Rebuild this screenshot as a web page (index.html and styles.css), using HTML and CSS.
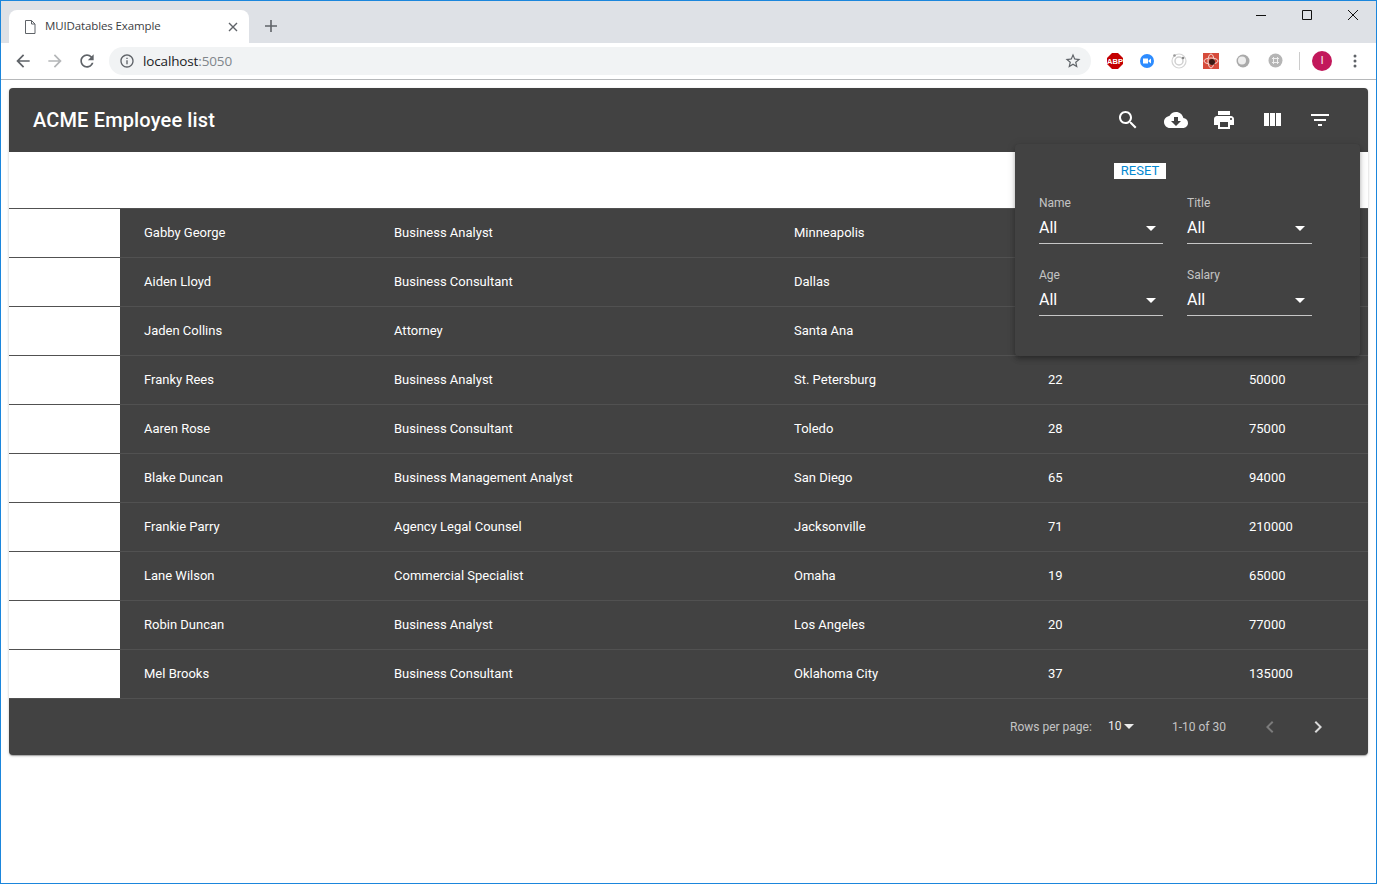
FILE: index.html
```html
<!DOCTYPE html>
<html lang="en">
<head>
<meta charset="utf-8">
<title>MUIDatables Example</title>
<link rel="stylesheet" href="styles.css">
</head>
<body>
<div class="window">
  <div class="tabstrip">
    <div class="tab">
      <svg class="tab-doc" width="12" height="14" viewBox="0 0 12 14"><path d="M1.5.5h6l3.5 3.5v9.5h-9.500zM7.500.5v3.500H11" fill="none" stroke="#5f6368"/></svg>
      <span class="tab-title">MUIDatables Example</span>
      <svg class="tab-close" width="10" height="10" viewBox="0 0 10 10"><path d="M1 1l8 8M9 1l-8 8" stroke="#5f6368" stroke-width="1.400"/></svg>
    </div>
    <svg class="new-tab" width="12" height="12" viewBox="0 0 12 12"><path d="M6 0v12M0 6h12" stroke="#5f6368" stroke-width="1.600"/></svg>
    <div class="win-controls">
      <svg width="10" height="10" viewBox="0 0 10 10"><path d="M0 5.500h10" stroke="#111"/></svg>
      <svg width="10" height="10" viewBox="0 0 10 10"><path d="M.5.500h9v9h-9z" fill="none" stroke="#111"/></svg>
      <svg width="10" height="10" viewBox="0 0 10 10"><path d="M0 0l10 10M10 0L0 10" stroke="#111"/></svg>
    </div>
  </div>
  <div class="browserbar">
    <div class="nav">
      <svg width="20" height="20" viewBox="0 0 24 24" fill="#5f6368"><path d="M20 11H7.830l5.590-5.590L12 4l-8 8 8 8 1.410-1.410L7.830 13H20v-2z"/></svg>
      <svg width="20" height="20" viewBox="0 0 24 24" fill="#b4b6b8"><path d="M4 11h12.170l-5.590-5.590L12 4l8 8-8 8-1.410-1.410L16.170 13H4v-2z"/></svg>
      <svg width="20" height="20" viewBox="0 0 24 24" fill="#5f6368"><path d="M17.650 6.350C16.200 4.900 14.210 4 12 4c-4.420 0-7.990 3.580-7.990 8s3.570 8 7.990 8c3.730 0 6.840-2.550 7.730-6h-2.080c-.82 2.330-3.040 4-5.650 4-3.310 0-6-2.690-6-6s2.690-6 6-6c1.660 0 3.140.69 4.220 1.780L13 11h7V4l-2.350 2.350z"/></svg>
    </div>
    <div class="omnibox">
      <svg width="16" height="16" viewBox="0 0 24 24" fill="#5f6368"><path d="M11 7h2v2h-2zm0 4h2v6h-2zm1-9C6.480 2 2 6.480 2 12s4.480 10 10 10 10-4.480 10-10S17.520 2 12 2zm0 18c-4.410 0-8-3.590-8-8s3.590-8 8-8 8 3.590 8 8-3.590 8-8 8z"/></svg>
      <span class="url">localhost<span class="url-port">:5050</span></span>
      <svg class="star" width="18" height="18" viewBox="0 0 24 24" fill="#5f6368"><path d="M22 9.240l-7.190-.62L12 2 9.190 8.630 2 9.240l5.460 4.730L5.820 21 12 17.270 18.180 21l-1.630-7.030L22 9.240zM12 15.400l-3.760 2.270 1-4.280-3.320-2.880 4.380-.38L12 6.100l1.710 4.040 4.380.38-3.320 2.880 1 4.280L12 15.400z"/></svg>
    </div>
    <div class="extensions">
      <svg width="16" height="16" viewBox="0 0 16 16"><path d="M5 0h6l5 5v6l-5 5H5l-5-5V5z" fill="#c40000"/><text x="8" y="10.800" class="abp">ABP</text></svg>
      <svg width="14" height="14" viewBox="0 0 14 14"><circle cx="7" cy="7" r="7" fill="#2d8cff"/><path d="M3 4.500h5v5H3zM8.500 6.500l2.500-2v5l-2.500-2z" fill="#fff"/></svg>
      <svg width="16" height="16" viewBox="0 0 16 16"><circle cx="8" cy="8" r="7" fill="none" stroke="#d4d4d4" stroke-width="1.200"/><circle cx="8" cy="8" r="4" fill="none" stroke="#d0d0d0" stroke-width="1.500"/><circle cx="3.500" cy="2.500" r="1.300" fill="#999"/><circle cx="12" cy="5" r="1.300" fill="#888"/></svg>
      <svg width="16" height="16" viewBox="0 0 16 16"><path d="M0 0h16v16H0z" fill="#d64b3b"/><ellipse cx="8" cy="8" rx="7" ry="3" fill="none" stroke="#f6d6d0"/><ellipse cx="8" cy="8" rx="3" ry="7" fill="none" stroke="#f6d6d0"/><circle cx="9" cy="9" r="3" fill="#3a1a14"/></svg>
      <svg width="14" height="14" viewBox="0 0 14 14"><circle cx="7" cy="7" r="6.500" fill="#aaa"/><circle cx="6" cy="6.500" r="4" fill="#eee"/></svg>
      <svg width="15" height="15" viewBox="0 0 15 15"><circle cx="7.500" cy="7.500" r="7" fill="#b5b5b5"/><path d="M5.500 4v7M9.500 4v7M4 5.500h7M4 9.500h7" stroke="#eee"/></svg>
    </div>
    <div class="bar-sep"></div>
    <div class="avatar">I</div>
    <svg class="menu-dots" width="4" height="14" viewBox="0 0 4 14" fill="#5f6368"><circle cx="2" cy="2" r="1.500"/><circle cx="2" cy="7" r="1.500"/><circle cx="2" cy="12" r="1.500"/></svg>
  </div>
  <main class="page">
    <section class="paper">
      <header class="table-toolbar">
        <h1 class="table-title">ACME Employee list</h1>
        <div class="tool-icons">
          <svg width="24" height="24" viewBox="0 0 24 24"><path d="M15.500 14h-.79l-.28-.27C15.410 12.590 16 11.110 16 9.500 16 5.910 13.090 3 9.500 3S3 5.910 3 9.500 5.910 16 9.500 16c1.610 0 3.090-.59 4.230-1.570l.27.28v.79l5 4.990L20.490 19l-4.990-5zm-6 0C7.010 14 5 11.990 5 9.500S7.010 5 9.500 5 14 7.010 14 9.500 11.990 14 9.500 14z"/></svg>
          <svg width="24" height="24" viewBox="0 0 24 24"><path d="M19.350 10.040C18.670 6.590 15.640 4 12 4 9.110 4 6.600 5.640 5.350 8.040 2.340 8.360 0 10.910 0 14c0 3.310 2.690 6 6 6h13c2.760 0 5-2.240 5-5 0-2.640-2.050-4.780-4.650-4.960zM17 13l-5 5-5-5h3V9h4v4h3z"/></svg>
          <svg width="24" height="24" viewBox="0 0 24 24"><path d="M19 8H5c-1.660 0-3 1.340-3 3v6h4v4h12v-4h4v-6c0-1.660-1.340-3-3-3zm-3 11H8v-5h8v5zm3-7c-.55 0-1-.45-1-1s.45-1 1-1 1 .45 1 1-.45 1-1 1zm-1-9H6v4h12V3z"/></svg>
          <svg width="24" height="24" viewBox="0 0 24 24"><path d="M10 18h5V5h-5v13zm-6 0h5V5H4v13zM16 5v13h5V5h-5z"/></svg>
          <svg width="24" height="24" viewBox="0 0 24 24"><path d="M10 18h4v-2h-4v2zM3 6v2h18V6H3zm3 7h12v-2H6v2z"/></svg>
        </div>
      </header>
      <div class="head-row"></div>
      <div class="row"><div class="select-cell"></div><div>Gabby George</div><div>Business Analyst</div><div>Minneapolis</div></div>
      <div class="row"><div class="select-cell"></div><div>Aiden Lloyd</div><div>Business Consultant</div><div>Dallas</div></div>
      <div class="row"><div class="select-cell"></div><div>Jaden Collins</div><div>Attorney</div><div>Santa Ana</div></div>
      <div class="row"><div class="select-cell"></div><div>Franky Rees</div><div>Business Analyst</div><div>St. Petersburg</div><div>22</div><div>50000</div></div>
      <div class="row"><div class="select-cell"></div><div>Aaren Rose</div><div>Business Consultant</div><div>Toledo</div><div>28</div><div>75000</div></div>
      <div class="row"><div class="select-cell"></div><div>Blake Duncan</div><div>Business Management Analyst</div><div>San Diego</div><div>65</div><div>94000</div></div>
      <div class="row"><div class="select-cell"></div><div>Frankie Parry</div><div>Agency Legal Counsel</div><div>Jacksonville</div><div>71</div><div>210000</div></div>
      <div class="row"><div class="select-cell"></div><div>Lane Wilson</div><div>Commercial Specialist</div><div>Omaha</div><div>19</div><div>65000</div></div>
      <div class="row"><div class="select-cell"></div><div>Robin Duncan</div><div>Business Analyst</div><div>Los Angeles</div><div>20</div><div>77000</div></div>
      <div class="row"><div class="select-cell"></div><div>Mel Brooks</div><div>Business Consultant</div><div>Oklahoma City</div><div>37</div><div>135000</div></div>
      <footer class="pager">
        <span class="rows-label">Rows per page:</span>
        <span class="rows-value">10<svg width="24" height="24" viewBox="0 0 24 24" class="rows-caret"><path d="M7 10l5 5 5-5z"/></svg></span>
        <span class="range">1-10 of 30</span>
        <svg class="page-prev" width="24" height="24" viewBox="0 0 24 24"><path d="M15.410 7.410L14 6l-6 6 6 6 1.410-1.410L10.830 12z"/></svg>
        <svg class="page-next" width="24" height="24" viewBox="0 0 24 24"><path d="M10 6L8.590 7.410 13.170 12l-4.580 4.590L10 18l6-6z"/></svg>
      </footer>
      <aside class="filter-pop">
        <div class="reset-line"><span class="reset">RESET</span></div>
        <div class="filter-grid">
          <div class="field"><label>Name</label><div class="select">All<svg width="24" height="24" viewBox="0 0 24 24"><path d="M7 10l5 5 5-5z"/></svg></div></div>
          <div class="field"><label>Title</label><div class="select">All<svg width="24" height="24" viewBox="0 0 24 24"><path d="M7 10l5 5 5-5z"/></svg></div></div>
          <div class="field"><label>Age</label><div class="select">All<svg width="24" height="24" viewBox="0 0 24 24"><path d="M7 10l5 5 5-5z"/></svg></div></div>
          <div class="field"><label>Salary</label><div class="select">All<svg width="24" height="24" viewBox="0 0 24 24"><path d="M7 10l5 5 5-5z"/></svg></div></div>
        </div>
      </aside>
    </section>
  </main>
</div>
</body>
</html>
```
FILE: styles.css
```css
* { box-sizing: border-box; }
html, body { margin: 0; padding: 0; background: #fff; overflow: hidden; }
.window {
  width: 1377px; height: 884px;
  border: 1px solid #1b86dc;
  display: flex; flex-direction: column;
  font-family: Roboto, "Liberation Sans", sans-serif;
}
.tabstrip {
  height: 42px; flex: none;
  background: #dee1e6;
  display: flex; align-items: flex-end;
  padding-left: 8px;
}
.tab {
  width: 240px; height: 33px;
  background: #fff;
  border-radius: 8px 8px 0 0;
  display: flex; align-items: center;
  padding: 0 11px 0 15px;
}
.tab-doc { flex: none; }
.tab-title {
  margin-left: 9px; flex: 1;
  font: 11.5px/14px "Open Sans", "Noto Sans", sans-serif;
  color: #3c4043;
  letter-spacing: -.12px;
  padding-bottom: 1px;
}
.new-tab { margin: 0 0 11px 16px; }
.win-controls {
  margin-left: auto;
  align-self: flex-start;
  display: flex; gap: 36px;
  padding: 9px 18px 0 0;
}
.browserbar {
  height: 37px; flex: none;
  background: #fff;
  border-bottom: 1px solid #b6b8ba;
  display: flex; align-items: center;
  padding-bottom: 1px;
}
.nav { display: flex; gap: 12px; padding-left: 12px; flex: none; }
.omnibox {
  margin-left: 12px;
  width: 982px; height: 28px;
  background: #f1f3f4;
  border-radius: 14px;
  display: flex; align-items: center;
  padding: 0 9px 0 10px;
  flex: none;
}
.url {
  margin-left: 8px;
  font: 13.5px "Open Sans", "Noto Sans", sans-serif;
  letter-spacing: -.14px;
  color: #202124;
}
.url-port { color: #80868b; }
.star { margin-left: auto; }
.extensions {
  width: 201px; flex: none;
  display: grid; grid-template-columns: repeat(6, 32px);
  justify-items: center; align-items: center;
  padding-left: 8px;
}
.abp { font: bold 7.5px "Liberation Sans", sans-serif; fill: #fff; text-anchor: middle; }
.bar-sep { width: 1px; height: 18px; background: #ccc; margin-left: 7px; flex: none; }
.avatar {
  width: 20px; height: 20px; border-radius: 50%;
  background: #c2185b; color: #fff;
  font-size: 10px; line-height: 20px; text-align: center;
  margin-left: 12px; flex: none;
}
.menu-dots { margin-left: 21px; flex: none; }

.page { padding: 8px; flex: 1; min-height: 0; }
.paper {
  position: relative;
  background: #424242;
  border-radius: 4px;
  box-shadow: 0 1px 3px rgba(0,0,0,.2), 0 1px 1px rgba(0,0,0,.14), 0 2px 1px -1px rgba(0,0,0,.12);
  color: #fff;
}
.table-toolbar {
  height: 64px;
  display: flex; align-items: center; justify-content: space-between;
  padding: 0 36px 0 24px;
}
.table-title {
  margin: 0;
  font-size: 20px; font-weight: 500; letter-spacing: .15px;
}
.tool-icons { display: flex; gap: 24px; fill: #fff; }
.head-row {
  height: 57px; background: #fff;
  border-bottom: 1px solid #515151;
}
.row {
  height: 49px;
  display: grid;
  grid-template-columns: 135px 250px 400px 254px 201px 1fr;
  align-items: center;
  border-bottom: 1px solid #515151;
  font-size: 13px;
  line-height: 16px;
}
.select-cell {
  align-self: stretch;
  width: 111px;
  background: #fff;
}
.pager {
  height: 56px;
  display: flex; align-items: center;
  font-size: 12px;
  color: rgba(255,255,255,.7);
  padding-left: 1001px;
}
.rows-label { width: 98px; flex: none; }
.rows-value {
  position: relative;
  width: 64px; flex: none;
  color: #fff; opacity: .9;
  margin-bottom: 2px;
}
.rows-caret { position: absolute; left: 9px; top: -5px; fill: #fff; }
.range { width: 86px; flex: none; }
.page-prev { fill: rgba(255,255,255,.3); flex: none; }
.page-next { fill: rgba(255,255,255,.8); margin-left: 24px; flex: none; }
.filter-pop {
  position: absolute;
  left: 1006px; top: 56px;
  width: 345px; height: 212px;
  background: #424242;
  border-radius: 4px;
  box-shadow: 0 2px 4px -1px rgba(0,0,0,.2), 0 4px 5px rgba(0,0,0,.14), 0 1px 10px rgba(0,0,0,.12);
  padding: 19px 24px 0;
}
.reset-line { height: 16px; padding-left: 75px; display: flex; }
.reset {
  display: block;
  width: 52px; height: 16px;
  background: #fff; color: #0288d1;
  font-size: 13px; line-height: 16px; text-align: center;
}
.filter-grid {
  display: grid;
  grid-template-columns: 124px 125px;
  column-gap: 24px; row-gap: 24px;
  margin-top: 16px;
}
.field { height: 48px; }
.field label {
  display: block;
  font-size: 12px; line-height: 16px;
  color: rgba(255,255,255,.7);
}
.select {
  height: 33px; position: relative;
  border-bottom: 1px solid rgba(255,255,255,.7);
  font-size: 16px; line-height: 24px;
  padding-top: 5px;
}
.select svg { position: absolute; right: 0; top: 5px; fill: #fff; }
```
